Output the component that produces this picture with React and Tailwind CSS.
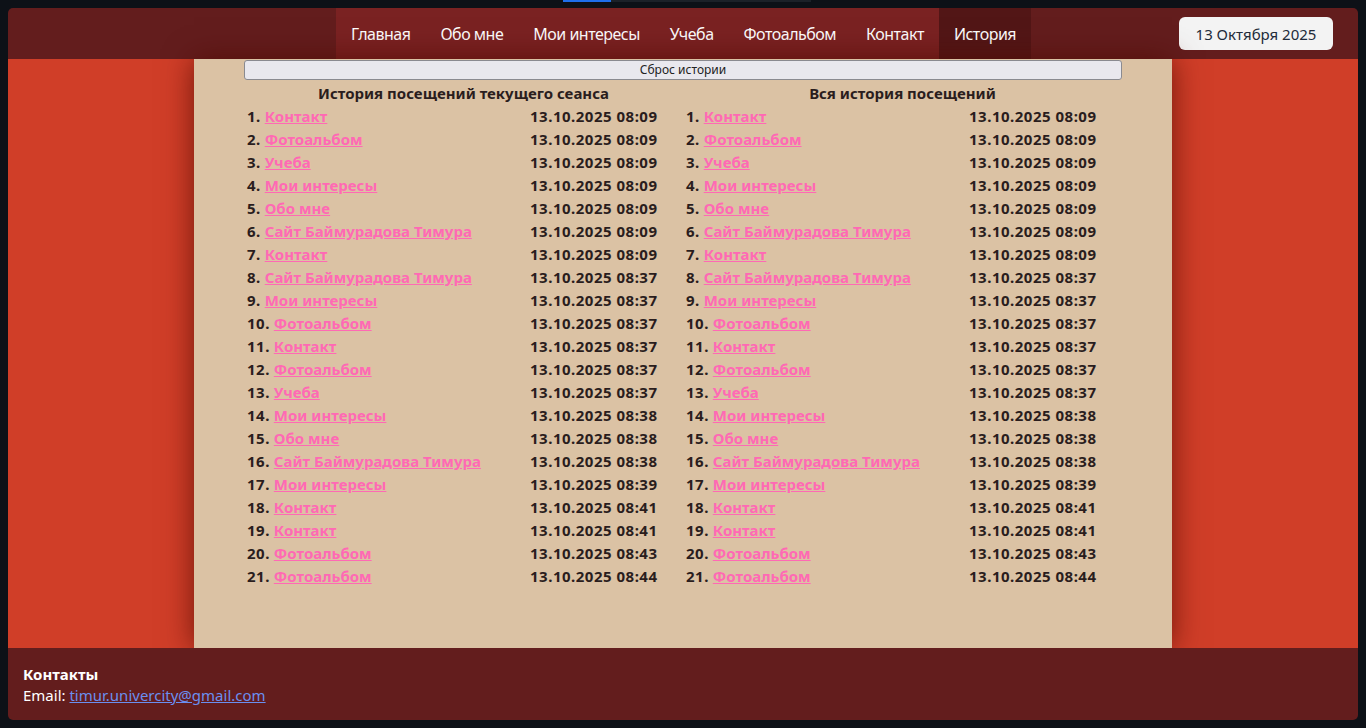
import React from "react";

const rows = [
  ["Контакт", "08:09"],
  ["Фотоальбом", "08:09"],
  ["Учеба", "08:09"],
  ["Мои интересы", "08:09"],
  ["Обо мне", "08:09"],
  ["Сайт Баймурадова Тимура", "08:09"],
  ["Контакт", "08:09"],
  ["Сайт Баймурадова Тимура", "08:37"],
  ["Мои интересы", "08:37"],
  ["Фотоальбом", "08:37"],
  ["Контакт", "08:37"],
  ["Фотоальбом", "08:37"],
  ["Учеба", "08:37"],
  ["Мои интересы", "08:38"],
  ["Обо мне", "08:38"],
  ["Сайт Баймурадова Тимура", "08:38"],
  ["Мои интересы", "08:39"],
  ["Контакт", "08:41"],
  ["Контакт", "08:41"],
  ["Фотоальбом", "08:43"],
  ["Фотоальбом", "08:44"],
];

const nav = ["Главная", "Обо мне", "Мои интересы", "Учеба", "Фотоальбом", "Контакт", "История"];

function History({ title }) {
  return (
    <div className="flex flex-col pt-[1px]">
      <div className="h-[24px] flex items-center justify-center text-[15px] font-bold text-[#2a1d1d]">{title}</div>
      <div className="pl-[3px] flex flex-col">
        {rows.map((r, i) => (
          <div key={i} className="h-[23px] flex items-center text-[15px] font-bold text-[#2a1d1d]">
            <div className="w-[283px] shrink-0">
              <span className="tracking-[0.5px]">{i + 1}.</span>{" "}
              <a href="#" className="text-[#ff69b4] underline">{r[0]}</a>
            </div>
            <div className="tracking-[0.5px]">13.10.2025 {r[1]}</div>
          </div>
        ))}
      </div>
    </div>
  );
}

export default function App() {
  return (
    <div className="w-[1366px] h-[728px] bg-[#0d1117] relative overflow-hidden" style={{ fontFamily: '"Noto Sans", "Open Sans", sans-serif' }}>
      <div className="absolute left-[563px] top-0 h-[2px] w-[48px] bg-[#1f6feb]"></div>
      <div className="absolute left-[611px] top-0 h-[2px] w-[200px] bg-[#1c2128]"></div>
      <div className="pt-[8px] pl-[8px]">
        <div className="w-[1350px] h-[712px] rounded-[5px] overflow-hidden flex flex-col">
          <header className="h-[51px] bg-[#631d1d] flex items-stretch">
            <div className="w-[328px]"></div>
            <nav className="flex bg-[#7a2222]">
              {nav.map((n) => (
                <div
                  key={n}
                  className={
                    "px-[15px] flex items-center text-[16px] text-white tracking-[-0.5px] " +
                    (n === "История" ? "bg-[#521616]" : "")
                  }
                >
                  {n}
                </div>
              ))}
            </nav>
            <div className="flex-1 flex items-center justify-end pr-[25px]">
              <div className="h-[33px] w-[154px] rounded-[6px] bg-[#f3f3f3] flex items-center justify-center text-[15px] text-[#222b3a] tracking-[0px] pt-[2px]">
                13 Октября 2025
              </div>
            </div>
          </header>
          <main className="h-[589px] bg-[#d03e28] flex justify-center">
            <div className="w-[978px] bg-[#dbc2a4] shadow-[0_0_28px_rgba(80,10,0,0.75)] px-[50px] pt-[1px]">
              <button className="w-full h-[20px] bg-[#e9e8ee] border border-[#8a8a90] rounded-[3px] text-[12px] text-[#222] flex items-center justify-center">
                Сброс истории
              </button>
              <div className="grid grid-cols-2">
                <History title="История посещений текущего сеанса" />
                <History title="Вся история посещений" />
              </div>
            </div>
          </main>
          <footer className="flex-1 bg-[#631d1d] pl-[15px] pt-[16px] text-[15px] text-white leading-[21px]">
            <div className="font-bold">Контакты</div>
            <div>
              Email: <a href="#" className="text-[#6a8ff0] underline">timur.univercity@gmail.com</a>
            </div>
          </footer>
        </div>
      </div>
    </div>
  );
}
